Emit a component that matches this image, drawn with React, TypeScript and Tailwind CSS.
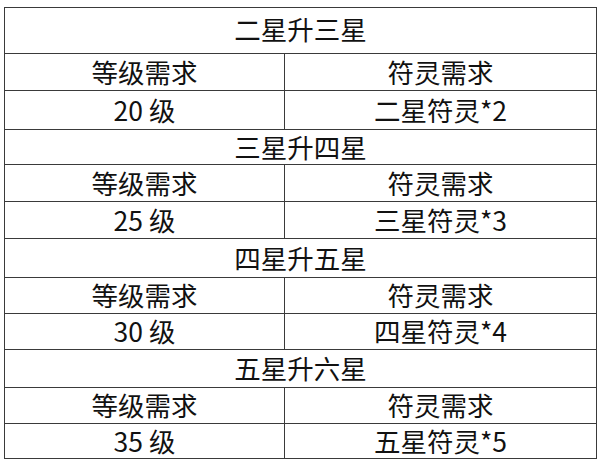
import React from "react";

interface Stage {
  title: string;
  level: string;
  item: string;
}

const stages: Stage[] = [
  { title: "二星升三星", level: "20 级", item: "二星符灵*2" },
  { title: "三星升四星", level: "25 级", item: "三星符灵*3" },
  { title: "四星升五星", level: "30 级", item: "四星符灵*4" },
  { title: "五星升六星", level: "35 级", item: "五星符灵*5" },
];

// row heights taken from the screenshot, three per stage
const heights = [
  [46, 37, 39],
  [35, 37, 37],
  [39, 36, 36],
  [38, 36, 35],
];

export default function App() {
  return (
    <div
      className="w-[600px] h-[461px] bg-white pt-[7px] pl-[4px] text-[#111]"
      style={{ fontFamily: '"Noto Sans CJK SC", "Noto Sans", sans-serif' }}
    >
      <table className="w-[592px] border-collapse table-fixed text-[26.5px] leading-none">
        <colgroup>
          <col className="w-[280px]" />
          <col className="w-[312px]" />
        </colgroup>
        <tbody>
          {stages.map((s, i) => (
            <React.Fragment key={s.title}>
              <tr style={{ height: heights[i][0] }}>
                <td
                  colSpan={2}
                  className={
                    "border border-[#3a3a3a] text-center p-0 " +
                    (i === 0 ? "align-top pt-[8px]" : "align-middle")
                  }
                >
                  {s.title}
                </td>
              </tr>
              <tr style={{ height: heights[i][1] }}>
                <td className="border border-[#3a3a3a] text-center align-middle p-0">等级需求</td>
                <td className="border border-[#3a3a3a] text-center align-middle p-0">符灵需求</td>
              </tr>
              <tr style={{ height: heights[i][2] }}>
                <td className="border border-[#3a3a3a] text-center align-middle p-0">{s.level}</td>
                <td className="border border-[#3a3a3a] text-center align-middle p-0">{s.item}</td>
              </tr>
            </React.Fragment>
          ))}
        </tbody>
      </table>
    </div>
  );
}
